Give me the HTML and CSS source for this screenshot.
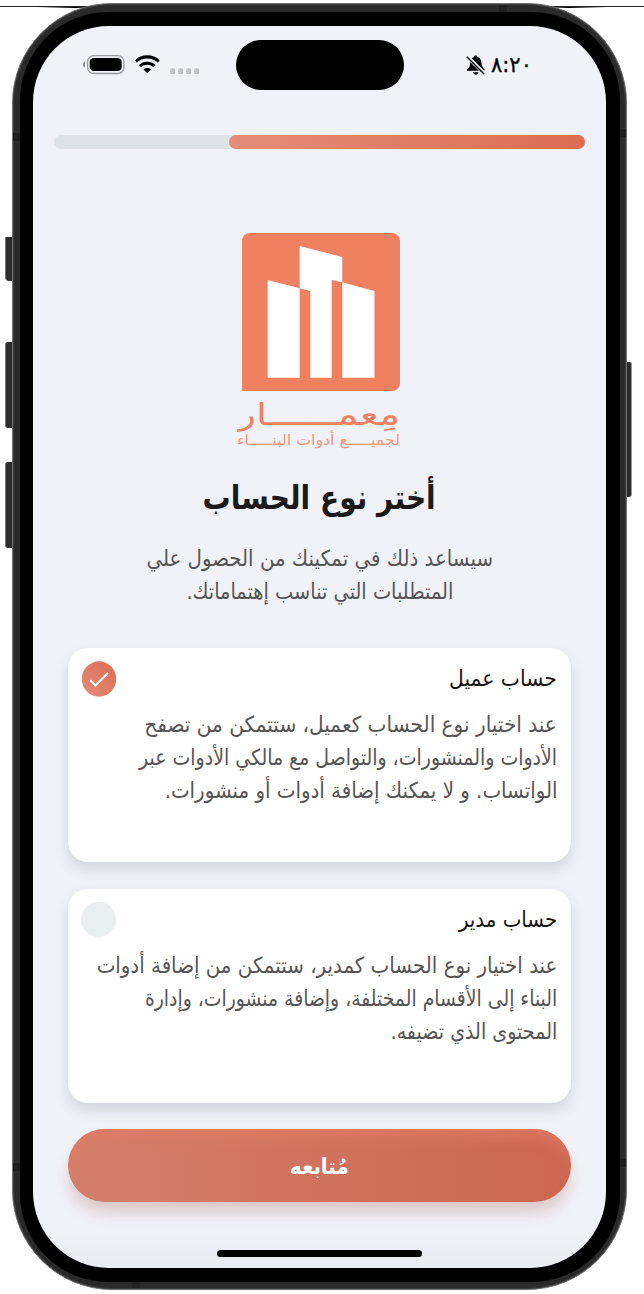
FILE: index.html
```html
<!DOCTYPE html>
<html lang="ar" dir="rtl">
<head>
<meta charset="utf-8">
<title>معمار</title>
<link rel="stylesheet" href="styles.css">
</head>
<body>
<div class="stage">
  <svg class="hairlines" width="644" height="10" viewBox="0 0 644 10" aria-hidden="true">
    <path d="M0 6 L120 6.500 L75 8 Z M644 6 L524 6.500 L569 8 Z"/>
    <path class="stroke" d="M0 6.500H120M524 6.500H644"/>
  </svg>
  <i class="key key-action"></i><i class="key key-up"></i><i class="key key-down"></i><i class="key key-power"></i>
  <div class="phone">
    <i class="band band-lt"></i><i class="band band-lb"></i><i class="band band-rt"></i><i class="band band-rb"></i><i class="band band-t"></i><i class="band band-b"></i>
    <div class="bezel">
      <main class="screen">
        <header class="status" dir="ltr">
          <svg class="status-left" width="122" height="24" viewBox="0 0 122 24" aria-hidden="true">
            <path d="M3 7.500v6C1.500 12.800 1 11.800 1 10.500S1.500 8.200 3 7.500Z" fill="#8d8d92"/>
            <rect x="5.600" y="1.600" width="36.300" height="17.900" rx="6" fill="none" stroke="#9a9a9f" stroke-width="1.300"/>
            <rect x="7.700" y="3.900" width="32" height="13.200" rx="4.200"/>
            <g fill="none" stroke="#000" stroke-width="3.100">
              <path d="M53.800 7.500a16.600 16.600 0 0 1 23 0"/>
              <path d="M58 12.100a10.600 10.600 0 0 1 14.600 0"/>
            </g>
            <path d="M61.500 15.400a5.600 5.600 0 0 1 7.600 0L65.300 19.300Z"/>
            <g fill="#c3c3c7"><rect x="88" y="14.300" width="5.200" height="5.600" rx="1.500"/><rect x="96" y="14.300" width="5.200" height="5.600" rx="1.500"/><rect x="104" y="14.300" width="5.200" height="5.600" rx="1.500"/><rect x="112" y="14.300" width="5.200" height="5.600" rx="1.500"/></g>
          </svg>
          <div class="island"></div>
          <div class="clock">
            <svg width="20" height="21" viewBox="0 0 20 21" aria-hidden="true">
              <path d="M1 15.700V14.500C3.500 12.500 4 10.500 4.200 7.500 4.400 4.500 6 2.600 8 2 8 1 8.600.400 9.700.400S11.400 1 11.500 2C14 2.700 15.200 4.700 15.400 7.500 15.600 10.500 16.500 12.500 18.600 14.500V15.700Z"/>
              <path d="M7 17.300h5.600c-.300 1.600-1.400 2.400-2.800 2.400S7.300 18.900 7 17.300Z"/>
              <path d="M1.200 1.500 18.800 19" stroke="#f1f2f8" stroke-width="3.800"/>
              <path d="M.8 1.800 18.300 19.300" stroke="#000" stroke-width="1.500"/>
            </svg>
            <span class="time">٨:٢٠</span>
          </div>
        </header>
        <div class="progress"><div class="progress-fill"></div></div>
        <svg class="logo" width="172" height="220" viewBox="0 0 172 220" role="img" aria-label="معمار">
          <path d="M13 1H155a8 8 0 0 1 8 8V151a8 8 0 0 1-8 8H5V9a8 8 0 0 1 8-8Z" fill="#ef8060"/>
          <path d="M30.700 48 62.700 56.300V14L105.300 25V50.300L137.500 59V145.800H105.300V50.300L94.700 48V145.800H73.300V59L62.700 56.300V145.800H30.700Z" fill="#fff"/>
          <text class="wordmark" x="163" y="192.500" textLength="163" lengthAdjust="spacingAndGlyphs">مِعمــــــار</text>
          <text class="tagline" x="163" y="212.500" textLength="163" lengthAdjust="spacingAndGlyphs">لجميـــــع أدوات البنـــــاء</text>
        </svg>
        <h1 class="title"><span class="line">أختر نوع الحساب</span></h1>
        <p class="lead"><span class="line lead-1">سيساعد ذلك في تمكينك من الحصول علي</span><span class="line lead-2">المتطلبات التي تناسب إهتماماتك.</span></p>
        <section class="card card-first">
          <div class="card-head"><h2><span class="line h-1">حساب عميل</span></h2>
            <svg class="check" width="36" height="36" viewBox="0 0 36 36"><defs><linearGradient id="g" x1="0" y1="1" x2="1" y2="0"><stop stop-color="#e48d79"/><stop offset="1" stop-color="#dc6c54"/></linearGradient></defs><ellipse cx="18" cy="18" rx="17.200" ry="17.700" fill="url(#g)"/><path d="m9.200 19.200 5.400 5.300L27 11.800" fill="none" stroke="#fff" stroke-width="2"/></svg>
          </div>
          <p><span class="line c1-1">عند اختيار نوع الحساب كعميل، ستتمكن من تصفح</span><span class="line c1-2">الأدوات والمنشورات، والتواصل مع مالكي الأدوات عبر</span><span class="line c1-3">الواتساب. و لا يمكنك إضافة أدوات أو منشورات.</span></p>
        </section>
        <section class="card">
          <div class="card-head"><h2><span class="line h-2">حساب مدير</span></h2><i class="radio"></i></div>
          <p><span class="line c2-1">عند اختيار نوع الحساب كمدير، ستتمكن من إضافة أدوات</span><span class="line c2-2">البناء إلى الأقسام المختلفة، وإضافة منشورات، وإدارة</span><span class="line c2-3">المحتوى الذي تضيفه.</span></p>
        </section>
        <button class="next"><span class="line">مُتابعه</span></button>
        <div class="home"></div>
      </main>
    </div>
  </div>
</div>
</body>
</html>
```
FILE: styles.css
```css
* { box-sizing: border-box; margin: 0; padding: 0; }
body { background: #fff; font-family: "DejaVu Sans", sans-serif; overflow: hidden; }
.stage { position: relative; width: 644px; height: 1294px; padding: 3px 18px 4px 12px; direction: ltr; }
.hairlines { position: absolute; left: 0; top: 0; }
.hairlines .stroke { stroke: #222; stroke-width: 1; }
.key { position: absolute; background: #2b2b2c; border-left: 1px solid #777; }
.key-action { left: 5px; top: 237px; width: 8px; height: 44px; border-radius: 1px 0 0 4px; }
.key-up { left: 5px; top: 342px; width: 8px; height: 86px; border-radius: 3px 0 0 3px; }
.key-down { left: 5px; top: 462px; width: 8px; height: 86px; border-radius: 3px 0 0 3px; }
.key-power { left: 625px; top: 362px; width: 7px; height: 135px; border-left: 0; border-right: 1px solid #999; border-radius: 0 2px 3px 0; }
.phone { position: relative; width: 615px; height: 1287px; padding: 8px 6px 7px 7px; background: #2a2a2a; border: 1px solid #707070; border-radius: 100px; box-shadow: inset 0 0 0 1px #3c3c3c; }
.band { position: absolute; background: #202020; }
.band-lt, .band-lb { left: 0; width: 8px; height: 8px; }
.band-rt, .band-rb { right: 0; width: 8px; height: 8px; }
.band-lt { top: 129px; }
.band-lb { top: 1159px; }
.band-rt { top: 125px; }
.band-rb { top: 1155px; }
.band-t { top: 1px; left: 486px; width: 8px; height: 8px; }
.band-b { bottom: 1px; left: 119px; width: 8px; height: 7px; }
.bezel { position: relative; height: 1270px; padding: 14px 14px 14px 13px; background: #000; border-radius: 88px; }
.screen { direction: rtl; display: flex; flex-direction: column; align-items: center; height: 1242px; overflow: hidden; border-radius: 76px; background: linear-gradient(#f1f2f8 97%, #ebecf2); }
.status { display: flex; width: 100%; height: 64px; padding: 14px 0 0 49px; flex: none; }
.status-left { margin-top: 14px; }
.island { width: 168px; height: 50px; margin-left: 32px; border-radius: 25px; background: #000; }
.clock { display: flex; margin: 14px 0 0 62px; gap: 5px; }
.clock svg { margin-top: 1px; }
.time { font: 21px/22px "DejaVu Sans", sans-serif; -webkit-text-stroke: .3px #000; }
.progress { flex: none; width: 531px; height: 14px; margin-top: 45px; border-radius: 7px; background: #dfe2e7; }
.progress-fill { width: 356px; height: 14px; border-radius: 7px; background: linear-gradient(90deg, #e48d79, #dc6c54); }
.logo { flex: none; margin: 83px 0 0 6px; direction: rtl; }
.wordmark { font: 30px "DejaVu Sans", sans-serif; fill: #ef8264; }
.tagline { font: 15px "DejaVu Sans", sans-serif; fill: #ef9a82; }
.line { display: block; white-space: nowrap; width: max-content; transform-origin: right center; }
.title { font-size: 33px; line-height: 50px; color: #1a1a1a; margin-top: 21px; }
.title .line { transform-origin: center; transform: scaleX(.85); }
.lead { margin-top: 19px; font-size: 22px; line-height: 33.300px; color: #555; }
.lead .line { margin: 0 auto; transform-origin: center; }
.lead-1 { transform: scaleX(.899); }
.lead-2 { transform: scaleX(.879); }
.card { flex: none; width: 503px; height: 214px; margin-top: 27px; padding: 13px 14px 0; border-radius: 20px; background: #fff; box-shadow: 0 7px 13px rgba(60, 70, 90, .17); }
.card-first { margin-top: 39px; }
.card-head { display: flex; justify-content: space-between; height: 36px; }
.check { margin-left: -1px; }
.card h2 { font-size: 22px; font-weight: 400; line-height: 36px; color: #151515; }
.card p { margin-top: 11px; font-size: 22px; line-height: 33.300px; color: #555; }
.h-1 { transform: scaleX(.922); }
.h-2 { transform: scaleX(.9); }
.c1-1 { transform: scaleX(.913); }
.c1-2 { transform: scaleX(.86); }
.c1-3 { transform: scaleX(.9); }
.c2-1 { transform: scaleX(.901); }
.c2-2 { transform: scaleX(.855); }
.c2-3 { transform: scaleX(.867); }
.radio { width: 35px; height: 35px; margin-left: -1px; border-radius: 50%; background: #e9eeee; }
.next { flex: none; display: flex; align-items: center; justify-content: center; width: 503px; height: 73px; margin-top: 26px; padding-top: 2px; border: 0; border-radius: 37px; font: 700 22px "DejaVu Sans", sans-serif; color: #fff; background: linear-gradient(90deg, #d47f6b, #cc6650); box-shadow: 0 12px 16px -2px rgba(150, 60, 40, .24), inset 0 14px 16px -8px #e07b65; }
.next .line { transform-origin: center; transform: scaleX(.906); }
.home { flex: none; width: 205px; height: 7px; margin-top: 48px; border-radius: 4px; background: #000; }
```
